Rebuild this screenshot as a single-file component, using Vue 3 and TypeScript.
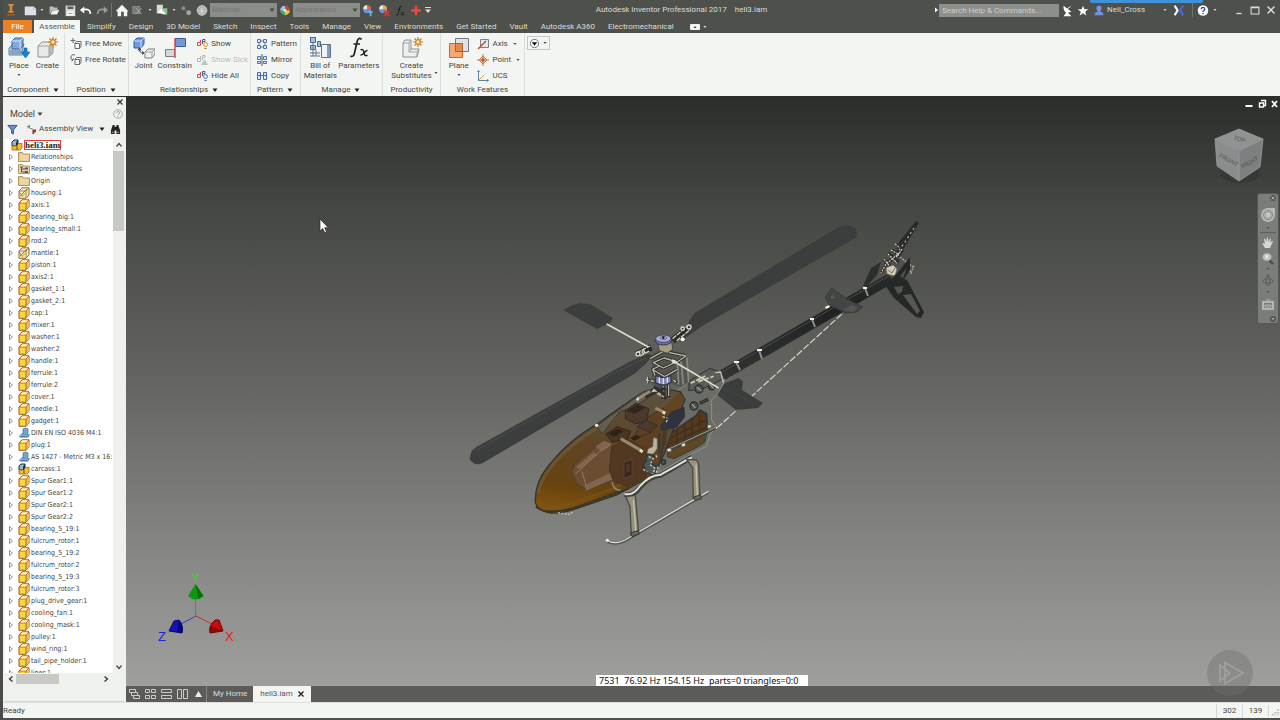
<script setup lang="ts">
interface TreeRow {
  label: string
  icon: string
}
interface SmallCommand {
  label: string
  icon: string
  disabled?: boolean
  menu?: boolean
}
interface BigCommand {
  lines: string[]
  icon: string
  menu?: boolean
}
interface Panel {
  title: string
  menu: boolean
  big: BigCommand[]
  small: SmallCommand[]
}

const menuTabs: string[] = [
  'Simplify', 'Design', '3D Model', 'Sketch', 'Inspect', 'Tools', 'Manage', 'View',
  'Environments', 'Get Started', 'Vault', 'Autodesk A360', 'Electromechanical',
]

const panels: Panel[] = [
  {
    title: 'Component', menu: true,
    big: [
      { lines: ['Place'], icon: 'place', menu: true },
      { lines: ['Create'], icon: 'create' },
    ],
    small: [],
  },
  {
    title: 'Position', menu: true, big: [],
    small: [
      { label: 'Free Move', icon: 'move' },
      { label: 'Free Rotate', icon: 'rotate' },
    ],
  },
  {
    title: 'Relationships', menu: true,
    big: [
      { lines: ['Joint'], icon: 'joint' },
      { lines: ['Constrain'], icon: 'constrain' },
    ],
    small: [
      { label: 'Show', icon: 'show' },
      { label: 'Show Sick', icon: 'sick', disabled: true },
      { label: 'Hide All', icon: 'hide' },
    ],
  },
  {
    title: 'Pattern', menu: true, big: [],
    small: [
      { label: 'Pattern', icon: 'pattern' },
      { label: 'Mirror', icon: 'mirror' },
      { label: 'Copy', icon: 'copy' },
    ],
  },
  {
    title: 'Manage', menu: true,
    big: [
      { lines: ['Bill of', 'Materials'], icon: 'bom' },
      { lines: ['Parameters'], icon: 'params' },
    ],
    small: [],
  },
  {
    title: 'Productivity', menu: false,
    big: [{ lines: ['Create', 'Substitutes'], icon: 'substitute', menu: true }],
    small: [],
  },
  {
    title: 'Work Features', menu: false,
    big: [{ lines: ['Plane'], icon: 'plane', menu: true }],
    small: [
      { label: 'Axis', icon: 'axis', menu: true },
      { label: 'Point', icon: 'point', menu: true },
      { label: 'UCS', icon: 'ucs' },
    ],
  },
]

const part = (label: string): TreeRow => ({ label, icon: 'part' })

const rows: TreeRow[] = [
  { label: 'Relationships', icon: 'folder' },
  { label: 'Representations', icon: 'reps' },
  { label: 'Origin', icon: 'folder' },
  { label: 'housing:1', icon: 'clear' },
  part('axis:1'),
  part('bearing_big:1'),
  part('bearing_small:1'),
  part('rod:2'),
  { label: 'mantle:1', icon: 'clear' },
  ...['piston:1', 'axis2:1', 'gasket_1:1', 'gasket_2:1', 'cap:1', 'mixer:1', 'washer:1',
    'washer:2', 'handle:1', 'ferrule:1', 'ferrule:2', 'cover:1', 'needle:1', 'gadget:1'].map(part),
  { label: 'DIN EN ISO 4036 M4:1', icon: 'bolt' },
  part('plug:1'),
  { label: 'AS 1427 - Metric M3 x 16:', icon: 'bolt' },
  { label: 'carcass:1', icon: 'assembly' },
  ...['Spur Gear1:1', 'Spur Gear1:2', 'Spur Gear2:1', 'Spur Gear2:2', 'bearing_5_19:1',
    'fulcrum_rotor:1', 'bearing_5_19:2', 'fulcrum_rotor:2', 'bearing_5_19:3', 'fulcrum_rotor:3',
    'plug_drive_gear:1', 'cooling_fan:1', 'cooling_mask:1', 'pulley:1', 'wind_ring:1',
    'tail_pipe_holder:1', 'liner:1'].map(part),
]
</script>

<template>
  <div class="app">
    <svg class="defs" aria-hidden="true">
      <defs>
        <symbol id="i-caret" viewBox="0 0 8 8"><path d="M1.500 2.500h5L4 6z" fill="currentColor" /></symbol>
        <symbol id="i-dot" viewBox="0 0 8 8"><path d="M2.500 3h3L4 5z" fill="currentColor" /></symbol>

        <symbol id="i-part" viewBox="0 0 12 12">
          <path d="M1 4 4 .8h7V8l-3 3.300H1z" fill="#f7d83c" stroke="#9a5a1c" />
          <path d="M8 11V4l3-3v7z" fill="#f6b75f" />
          <path d="M1 4h7v7M8 4l3-3" fill="none" stroke="#b46b24" />
          <path d="M2.300 3.500 4.500 1.300H10L8 3.500z" fill="#fff6c8" />
        </symbol>
        <symbol id="i-clear" viewBox="0 0 12 12">
          <path d="M1 4 4 .8h7V8l-3 3.300H1z" fill="#f5edd0" stroke="#8d6a35" />
          <path d="M1 4h7v7M8 4l3-3M2 9l7-7M1 5l4 5" fill="none" stroke="#a9803e" />
          <path d="m2.500 9.500 4-4 1 1.500-3 3z" fill="#f1c32e" />
        </symbol>
        <symbol id="i-folder" viewBox="0 0 12 12">
          <path d="M.5 10.500v-9h4l1 1.500h6v7.500z" fill="#e6c793" stroke="#b69561" />
          <path d="M1.500 4h9v5.500h-9z" fill="#f0d5a7" />
        </symbol>
        <symbol id="i-reps" viewBox="0 0 12 12">
          <path d="M.5 10.500v-9h4l1 1.500h6v7.500z" fill="#e6d1a9" stroke="#b69561" />
          <path d="M3.500 4v5H7M3.500 6H7M2 4h3" fill="none" stroke="#555" /><path d="M7 4.500h3v2H7zM7 8h3v2H7z" fill="#555" />
        </symbol>
        <symbol id="i-bolt" viewBox="0 0 12 12">
          <path d="m1 9 3-2.500 8 1-2 3H2z" fill="#3e7cab" />
          <path d="M5 2 8 1l2 1v4.500L8 8 5 7z" fill="#76a7cf" stroke="#386a93" stroke-width=".7" />
          <path d="m2 9 3-1 5 .5" stroke="#a9cbe3" fill="none" />
        </symbol>
        <symbol id="i-assembly" viewBox="0 0 12 12">
          <path d="M1 3 3 1h4v4L5 7H1z" fill="#9db7d2" stroke="#222c3a" />
          <path d="M1 7h5v4H1zM6 6l1.500-1.500H11V9l-2 2H6z" fill="#f0c02c" stroke="#9c6516" stroke-width=".8" />
          <path d="M5 3.500 7 1v4L5 7z" fill="#1d2c40" />
        </symbol>

        <symbol id="i-place" viewBox="0 0 22 22">
          <path d="m1 11 4-4h11l-2 7 4 1-4 3H1z" fill="#b9cbe0" stroke="#64809f" />
          <path d="M4 4 7 1h8v8l-3 3H4z" fill="#7ea8de" stroke="#39649f" />
          <path d="M4 4h8v8M12 4l3-3" fill="none" stroke="#dbe8f8" />
          <path d="M1 13h12v4H1z" fill="#88a4c1" />
          <path d="M16 11h3v4h3l-4.500 6L13 15h3z" fill="#1682d4" stroke="#0d63ad" stroke-width=".6" />
        </symbol>
        <symbol id="i-create" viewBox="0 0 22 22">
          <path d="m2 9 4-4h11v11l-4 4H2z" fill="#e8e9e8" stroke="#8b8f93" />
          <path d="M13 20V9l4-4v11z" fill="#b5b9bb" />
          <path d="M2 9h11v11" fill="none" stroke="#a1a5a7" />
          <path d="M17 0v10M12 5h10M13.500 1.500l7 7M20.500 1.500l-7 7" stroke="#c77a1c" stroke-width="1.200" />
          <circle cx="17" cy="5" r="2.300" fill="#fff0a6" stroke="#c1660c" />
        </symbol>
        <symbol id="i-joint" viewBox="0 0 22 22">
          <path d="m1 4 3-3h7v6l-3 4H1z" fill="#6f9be0" stroke="#335a9a" />
          <path d="M1 4h7v7M8 4l3-3" fill="none" stroke="#cadcf6" />
          <path d="m12 15 3-3h7v5l-3 4h-7z" fill="#eff0ef" stroke="#787d83" />
          <path d="M12 15h7v6M19 15l3-3" fill="none" stroke="#9b9fa4" />
          <path d="M6.500 12c0 3 1 4 4 4M6.500 11 5 13.500M6.500 11 8 13.500M11 16l-2-1.500M11 16l-2 1.500" fill="none" stroke="#333" />
        </symbol>
        <symbol id="i-constrain" viewBox="0 0 22 22">
          <path d="M11.500 1.500h10v8h-10z" fill="#7699d3" stroke="#375c9c" />
          <path d="M1.500 12.500h9v7h-9z" fill="#d6d8d8" stroke="#7c7f82" />
          <path d="M11 1v20" stroke="#e14145" stroke-width="1.400" />
        </symbol>
        <symbol id="i-bom" viewBox="0 0 22 22">
          <path d="M1.500.5h5v5h-5zM1.500 8.500h5v4h-5zM8.500 4.500h3v5h-3z" fill="#a7c0e1" stroke="#46698f" />
          <path d="M1 16h10M1 19h10M4 6v13M7 13v6" stroke="#667587" />
          <path d="M12.500 7.500h9v13h-9z" fill="#f2f3f4" stroke="#676f78" />
          <path d="M18 8h3v12h-3z" fill="#78a0cf" />
        </symbol>
        <symbol id="i-params" viewBox="0 0 22 22">
          <path d="M13.500 2.500C12 .3 9.800 1.500 9 5L6.500 16c-.7 3.300-2.500 4-4 3M5.500 7h6.500" fill="none" stroke="#222" stroke-width="1.700" />
          <path d="M12.500 13c2-1.500 3 0 3.500 2.500.6 3 1.500 4 3.500 2.500M19.500 13.500c-2-.7-4.500 5.500-7 4.500" fill="none" stroke="#222" stroke-width="1.500" />
        </symbol>
        <symbol id="i-substitute" viewBox="0 0 22 22">
          <path d="M2 6 4 3h6v9h8l-2 8H2z" fill="#eff0ee" stroke="#888d91" />
          <path d="M2 6h6v9h8v5M8 6l2-3M8 15l2-3M16 15l2-3" fill="none" stroke="#9fa3a6" />
          <path d="M17 0v10M12 5h10M13.500 1.500l7 7M20.500 1.500l-7 7" stroke="#c77a1c" stroke-width="1.200" />
          <circle cx="17" cy="5" r="2.300" fill="#fff0a6" stroke="#c1660c" />
        </symbol>
        <symbol id="i-plane" viewBox="0 0 22 22">
          <path d="M7.500 1.500h13v13h-13z" fill="#dfe2e7" stroke="#73797f" />
          <path d="M1.500 6.500h13v14h-13z" fill="#f79a57" fill-opacity=".85" stroke="#cd6a22" />
          <path d="M7.500 6.500h7v8h-7z" fill="#e58a4e" stroke="#a56235" />
        </symbol>

        <symbol id="i-move" viewBox="0 0 12 12">
          <path d="m5 5 1.500-1.500H11V8l-1.500 2.500H5zM5 5.500h4.500v5M3 0v5M.5 2.500h5" fill="#fafafa" stroke="#666b70" />
        </symbol>
        <symbol id="i-rotate" viewBox="0 0 12 12">
          <path d="m5 5 1.500-1.500H11V8l-1.500 2.500H5zM5 5.500h4.500v5" fill="#fafafa" stroke="#666b70" />
          <path d="M5 1C3 0 .5 1.500 1 4c.2 1 .8 2 2 2M3.500 4.500 3 6 1.500 7" fill="none" stroke="#555" />
        </symbol>
        <symbol id="i-show" viewBox="0 0 12 12">
          <path d="M1.500 4.500h3v3h-3zM4.500 2v5" fill="none" stroke="#d65050" />
          <path d="M6.500 6V1.500H9v2H7" fill="none" stroke="#3d64b0" />
          <circle cx="9.500" cy="6.500" r="2" fill="#fff5c0" stroke="#d79a22" /><path d="M8.500 10.500h2" stroke="#a16b22" />
        </symbol>
        <symbol id="i-sick" viewBox="0 0 12 12">
          <path d="M1.500 4.500h3v3h-3zM4.500 2v5M6.500 6V1.500H9v2H7" fill="none" stroke="#b6b8b6" />
          <path d="m8.500 5 3.500 6H5z" fill="#c2c4c2" />
        </symbol>
        <symbol id="i-hide" viewBox="0 0 12 12">
          <path d="M1.500 4.500h3v3h-3zM4.500 2v5" fill="none" stroke="#d65050" />
          <path d="M6.500 6V1.500H9v2H7" fill="none" stroke="#3d64b0" />
          <circle cx="9.500" cy="6.500" r="2" fill="#e6f0ff" stroke="#4b7ac0" /><path d="M8.500 10.500h2" stroke="#4b5c7c" />
        </symbol>
        <symbol id="i-pattern" viewBox="0 0 12 12">
          <path d="M1.500 1.500h3v3h-3zM7.500 1.500h3v3h-3zM1.500 7.500h3v3h-3zM7.500 7.500h3v3h-3z" fill="#dbe7f7" stroke="#4d72b2" />
          <path d="M5 3h2M5 9h2M3 5v2M9 5v2" stroke="#777" />
        </symbol>
        <symbol id="i-mirror" viewBox="0 0 12 12">
          <path d="M1.500 2.500h3v3h-3zM1.500 7.500h3v2h-3zM7.500 2.500h3v3h-3zM7.500 7.500h3v2h-3z" fill="#dbe7f7" stroke="#4d72b2" />
          <path d="M6 0v12" stroke="#555" />
        </symbol>
        <symbol id="i-copy" viewBox="0 0 12 12">
          <path d="M1.500 2.500h3v3h-3zM1.500 5.500h3v4h-3zM7.500 2.500h3v3h-3zM7.500 5.500h3v4h-3z" fill="#dbe7f7" stroke="#3f69b5" />
          <path d="M5 5.500h2" stroke="#666" />
        </symbol>
        <symbol id="i-axis" viewBox="0 0 12 12">
          <path d="M3.500 1.500h8v8h-8z" fill="#e4e6e8" stroke="#7c8186" /><path d="m1 11 8-8" stroke="#b9462a" stroke-width="1.200" />
        </symbol>
        <symbol id="i-point" viewBox="0 0 12 12">
          <path d="m6 2 4 4-4 4-4-4z" fill="#f6c5a0" stroke="#d27a49" /><path d="M6 0v12M0 6h12" stroke="#d27a49" />
          <circle cx="6" cy="6" r="1.500" fill="#b2511f" />
        </symbol>
        <symbol id="i-ucs" viewBox="0 0 12 12">
          <path d="M1.500 1v9.500H11" fill="none" stroke="#5f7fa8" /><path d="m2 10 5-5" stroke="#c8a645" />
          <path d="m0 2 1.500-2L3 2zM10 9l2 1.500L10 12z" fill="#5474a0" />
        </symbol>
      </defs>
    </svg>

    <header class="titlebar">
      <div class="quick">
        <button class="qb" aria-label="Application menu">
          <svg viewBox="0 0 16 16"><path d="M5 1h6v2H9.500v6H11v2H5V9h1.500V3H5z" fill="#d98b3c" /><path d="M4 13.500h8" stroke="#b2641e" stroke-width="2" stroke-dasharray="2 1" /></svg>
        </button>
        <i class="nudge"></i>
        <button class="qb" aria-label="New"><svg viewBox="0 0 16 16"><path d="M2 4h10l3 3v7H2z" fill="#dedfe6" /><path d="M12 4v3h3" fill="#fff" stroke="#888b92" stroke-width=".6" /></svg></button>
        <button class="qc" aria-label="New options"><svg><use href="#i-dot" /></svg></button>
        <button class="qb" aria-label="Open"><svg viewBox="0 0 16 16"><path d="M3 13V4h4l1 1h4v3H6z" fill="#b9bdb7" /><path d="m6 8.500 8-.5-2.500 5H4z" fill="#f1f3ef" /></svg></button>
        <button class="qb" aria-label="Save"><svg viewBox="0 0 16 16"><path d="M3 3h11v12H3z" fill="#dcdedb" /><path d="M5 4h7v3H5z" fill="#555e66" /><path d="M5 10h7v4H5z" fill="#fff" /><path d="M6 12h5" stroke="#888" /></svg></button>
        <button class="qb" aria-label="Undo"><svg viewBox="0 0 16 16"><path d="M5 7.500c6-1 8 1 8 5" fill="none" stroke="#fff" stroke-width="2" /><path d="m1 8 5-4v8z" fill="#fff" /></svg></button>
        <button class="qb" aria-label="Redo"><svg viewBox="0 0 16 16"><path d="M11 7.500c-6-1-8 1-8 5" fill="none" stroke="#999b98" stroke-width="2" /><path d="m15 8-5-4v8z" fill="#999b98" /></svg></button>
        <i class="qsep"></i>
        <button class="qb" aria-label="Home"><svg viewBox="0 0 16 16"><path d="m1 9 7-7 7 7-1 1v5h-4v-5H7v5H3v-5z" fill="#f5f6f3" /></svg></button>
        <button class="qb" aria-label="Appearance overrides"><svg viewBox="0 0 16 16"><path d="M2 4h8v8H2z" fill="#777976" stroke="#9c9e9b" stroke-width=".8" /><path d="m5 13 7-7M6 6l6 7" stroke="#b0b2ae" /></svg></button>
        <button class="qc" aria-label="Override options"><svg><use href="#i-dot" /></svg></button>
        <button class="qb" aria-label="Select"><svg viewBox="0 0 16 16"><path d="M2 2h7v10H2z" fill="#d8dbd7" /><path d="M8 6h6v7H8z" fill="#8bc38a" /><path d="m4 11 3-4 5 6" fill="#fff" stroke="#fff" /></svg></button>
        <button class="qc" aria-label="Select options"><svg><use href="#i-dot" /></svg></button>
        <button class="qb" aria-label="Links"><svg viewBox="0 0 16 16"><circle cx="5" cy="6" r="2.200" fill="#8a8c89" /><circle cx="11" cy="11" r="2.800" fill="#a6a8a5" /><path d="m6 7 4 3" stroke="#777" /></svg></button>
        <button class="qb" aria-label="Globe"><svg viewBox="0 0 16 16"><circle cx="8" cy="8.500" r="5.500" fill="#a8aaa9" stroke="#d9dbd8" /><path d="M3 9h10M8 4v10M5 5l6 8M11 5l-6 8" stroke="#e5e5e5" stroke-width=".7" /></svg></button>
        <span class="combo"><select aria-label="Material" disabled><option>Material</option></select><svg><use href="#i-caret" /></svg></span>
        <button class="qb" aria-label="Color wheel"><svg viewBox="0 0 16 16"><path d="M8 8.500V3a5.500 5.500 0 0 1 5.500 5.500z" fill="#e33c32" /><path d="M8 8.500h5.500A5.500 5.500 0 0 1 8 14z" fill="#f5c338" /><path d="M8 8.500V14a5.500 5.500 0 0 1-5.500-5.500z" fill="#49ad54" /><path d="M8 8.500H2.500A5.500 5.500 0 0 1 8 3z" fill="#9bc4f5" /><circle cx="8" cy="8.500" r="1.800" fill="#fff" fill-opacity=".7" /></svg></button>
        <span class="combo"><select aria-label="Appearance" disabled><option>Appearance</option></select><svg><use href="#i-caret" /></svg></span>
        <button class="qb" aria-label="Adjust"><svg viewBox="0 0 16 16"><circle cx="7" cy="7" r="4.500" fill="#6795d6" /><path d="M7 7V2.500A4.500 4.500 0 0 1 11.500 7z" fill="#e2584c" /><path d="M7 7H2.500A4.500 4.500 0 0 1 7 2.500z" fill="#ece7d9" /><path d="M8 9h6l-2 3v3h-2v-3z" fill="#68b6ef" /></svg></button>
        <button class="qb" aria-label="Clear"><svg viewBox="0 0 16 16"><circle cx="7" cy="7" r="4.500" fill="#6795d6" /><path d="M7 7V2.500A4.500 4.500 0 0 1 11.500 7z" fill="#e8a74c" /><path d="M7 7H2.500A4.500 4.500 0 0 1 7 2.500z" fill="#ece7d9" /><path d="m8 9 6 6M14 9l-6 6" stroke="#e0362c" stroke-width="1.800" /></svg></button>
        <button class="qb" aria-label="Formula"><svg viewBox="0 0 16 16"><path d="M10 4c-2-1-2.500 1-3 4l-1 4c-.3 1.500-1 2-2.500 1.500M5 7.500h4M9 10l4 4M13 10l-4 4" fill="none" stroke="#222" stroke-width="1.200" /></svg></button>
        <button class="qb" aria-label="Add"><svg viewBox="0 0 16 16"><path d="M8 3v11M2.500 8.500h11" stroke="#ef4a3d" stroke-width="2.800" /></svg></button>
        <button class="qc" aria-label="Customize"><svg viewBox="0 0 8 8"><path d="M1 1.500h6" stroke="#ddd" /><path d="M1 3.500h6L4 7z" fill="#ddd" /></svg></button>
      </div>
      <div class="doc-title"><span>Autodesk Inventor Professional 2017</span><span>heli3.iam</span></div>
      <div class="info">
        <button class="qc" aria-label="Collapse search"><svg viewBox="0 0 8 8"><path d="M4 1.500v5L7 4z" fill="#fff" /></svg></button>
        <input class="search" type="text" aria-label="Search help and commands" placeholder="Search Help &amp; Commands...">
        <button class="qb" aria-label="Subscription"><svg viewBox="0 0 16 16"><path d="m4 3 9 7-4 1 4 4H4l3-4C4 9 4 6 4 3z" fill="#fff" /><path d="m8 7 4-3" stroke="#fff" /></svg></button>
        <button class="qb" aria-label="Favorites"><svg viewBox="0 0 16 16"><path d="m8 3 1.600 4.200h4.400L10.500 10l1.300 4.300L8 11.800l-3.800 2.500L5.500 10 2 7.200h4.400z" fill="#fff" /></svg></button>
        <button class="account"><svg viewBox="0 0 16 16"><path d="M8 3c3 0 3.500 2.500 2.500 5L9.500 10c3 .5 3.500 1.500 3.500 4H3c0-2.500.5-3.500 3.500-4L5.500 8C4.500 5.500 5 3 8 3z" fill="#6f95e0" /></svg><span>Neil_Cross</span></button>
        <button class="qc" aria-label="Account menu"><svg><use href="#i-dot" /></svg></button>
        <button class="qb exchange" aria-label="Exchange"><svg viewBox="0 0 16 16"><path d="m3 3 3.500 5.500L3 14" fill="none" stroke="#fff" stroke-width="2.400" /><path d="m13 3-4 5.500 4 5.500" fill="none" stroke="#4967cf" stroke-width="2.800" /></svg></button>
        <i class="qsep"></i>
        <button class="qb" aria-label="Help"><svg viewBox="0 0 16 16"><circle cx="8" cy="8.500" r="6" fill="#fff" /><path d="M6 7c0-2.700 4-2.700 4 0C10 8.500 8 8.500 8 10.300M8 11.500v1.300" fill="none" stroke="#2b50b4" stroke-width="1.600" /></svg></button>
        <button class="qc" aria-label="Help menu"><svg><use href="#i-dot" /></svg></button>
        <div class="window-buttons">
          <button class="qb" aria-label="Minimize"><svg viewBox="0 0 16 16"><path d="M5 12h6" stroke="#ddd" stroke-width="1.500" /></svg></button>
          <button class="qb" aria-label="Maximize"><svg viewBox="0 0 16 16"><path d="M3.500 4.500h9v8h-9zM3 5.500h10" fill="none" stroke="#ddd" stroke-width="1.200" /></svg></button>
          <button class="qb" aria-label="Close"><svg viewBox="0 0 16 16"><path d="m4 4 8 8M12 4l-8 8" stroke="#e5e5e5" stroke-width="1.500" /></svg></button>
        </div>
        <i class="blue-strip"></i>
      </div>
    </header>

    <nav class="tabs">
      <button class="tab file">File</button>
      <button class="tab active">Assemble</button>
      <button v-for="t in menuTabs" :key="t" class="tab">{{ t }}</button>
      <button class="tab-toggle" aria-label="Minimize ribbon">
        <svg class="pill" viewBox="0 0 10 8"><rect x="0" y="1" width="10" height="6" rx="1" fill="#f2f2f2" /><path d="M3.500 5h3L5 3z" fill="#444" /></svg>
        <svg class="tiny"><use href="#i-dot" /></svg>
      </button>
    </nav>

    <section class="ribbon">
      <div v-for="p in panels" :key="p.title" class="panel">
        <div class="panel-body">
          <button v-for="b in p.big" :key="b.icon" class="big">
            <svg class="big-icon"><use :href="'#i-' + b.icon" /></svg>
            <span v-for="l in b.lines" :key="l">{{ l }}</span>
            <svg v-if="b.menu" :class="['tiny', b.lines.length > 1 ? 'beside' : '']"><use href="#i-dot" /></svg>
          </button>
          <div v-if="p.small.length" class="stack">
            <button v-for="s in p.small" :key="s.label" class="small" :disabled="s.disabled">
              <svg class="small-icon"><use :href="'#i-' + s.icon" /></svg>
              <span>{{ s.label }}</span>
              <svg v-if="s.menu" class="tiny"><use href="#i-dot" /></svg>
            </button>
          </div>
        </div>
        <div class="panel-title">{{ p.title }}<svg v-if="p.menu" class="tiny"><use href="#i-caret" /></svg></div>
      </div>
      <button class="ribbon-options" aria-label="Ribbon options">
        <svg viewBox="0 0 12 12"><circle cx="6" cy="6" r="4.500" fill="#fff" stroke="#666" /><path d="M3 4.500h6L6 8.500z" fill="#111" /></svg>
        <svg class="tiny"><use href="#i-dot" /></svg>
      </button>
    </section>

    <main class="work">
      <aside class="browser">
        <div class="browser-close"><button aria-label="Close browser"><svg viewBox="0 0 8 8"><path d="m1.500 1.500 5 5M6.500 1.500l-5 5" stroke="#333" stroke-width="1.200" /></svg></button></div>
        <div class="browser-head">
          <button class="model">Model<svg class="tiny"><use href="#i-caret" /></svg></button>
          <button class="help" aria-label="Browser help"><svg viewBox="0 0 10 10"><circle cx="5" cy="5" r="4.300" fill="none" stroke="#999" stroke-width=".8" /><path d="M3.700 4c0-2 2.800-2 2.800 0C6.500 5 5 5 5 6.300M5 7v1" fill="none" stroke="#8a8a8a" stroke-width=".9" /></svg></button>
        </div>
        <div class="browser-tools">
          <button aria-label="Filter"><svg viewBox="0 0 12 12"><path d="M1 1.500h10L7 6.500V11l-2-1V6.500z" fill="#6f8fc0" stroke="#34507e" /></svg></button>
          <button class="view-select"><svg viewBox="0 0 12 12"><path d="M1 3h3M3.500 1v4M5 5h2" stroke="#555" /><path d="M7 6h4v3H9v2H7z" fill="#9a3838" /></svg><span>Assembly View</span><svg class="tiny"><use href="#i-caret" /></svg></button>
          <button aria-label="Find"><svg viewBox="0 0 12 12"><path d="M3 1h2v2h2V1h2l2 6v4H7V7H5v4H1V7z" fill="#222" /><path d="M2 9h2M8 9h2" stroke="#bbb" /></svg></button>
        </div>
        <div class="tree-area">
          <ul class="tree">
            <li class="root"><svg class="node"><use href="#i-assembly" /></svg><span>heli3.iam</span></li>
            <li v-for="r in rows" :key="r.label">
              <button class="expand" :aria-label="'Expand ' + r.label"><svg viewBox="0 0 6 8"><path d="M1.500 1.500v5L4.500 4z" fill="#fff" stroke="#777" stroke-width=".8" /></svg></button>
              <svg class="node"><use :href="'#i-' + r.icon" /></svg>
              <span>{{ r.label }}</span>
            </li>
          </ul>
          <div class="vscroll">
            <button aria-label="Scroll up"><svg viewBox="0 0 8 8"><path d="m1.500 5.500 2.500-3 2.500 3" fill="none" stroke="#444" stroke-width="1.200" /></svg></button>
            <i></i>
            <button aria-label="Scroll down"><svg viewBox="0 0 8 8"><path d="m1.500 2.500 2.500 3 2.500-3" fill="none" stroke="#444" stroke-width="1.200" /></svg></button>
          </div>
        </div>
        <div class="hscroll">
          <button aria-label="Scroll left"><svg viewBox="0 0 8 8"><path d="m5.500 1.500-3 2.500 3 2.500" fill="none" stroke="#333" stroke-width="1.300" /></svg></button>
          <i></i>
          <button aria-label="Scroll right"><svg viewBox="0 0 8 8"><path d="m2.500 1.500 3 2.500-3 2.500" fill="none" stroke="#333" stroke-width="1.300" /></svg></button>
        </div>
        <div class="browser-foot"></div>
      </aside>

      <div class="stage">
        <div class="viewport">
          <svg class="scene" viewBox="126 97 1154 589" role="img" aria-label="Helicopter assembly">
            <defs>
              <linearGradient id="hull" x1=".5" y1="0" x2=".35" y2="1">
                <stop offset="0" stop-color="#5b5240" /><stop offset=".45" stop-color="#5e4526" /><stop offset=".8" stop-color="#67430f" /><stop offset="1" stop-color="#80530f" />
              </linearGradient>
              <linearGradient id="boom" x1="0" y1="0" x2=".35" y2="1">
                <stop offset="0" stop-color="#454746" /><stop offset=".5" stop-color="#1f2120" /><stop offset="1" stop-color="#393b3a" />
              </linearGradient>
              <pattern id="carbon" width="4" height="4" patternUnits="userSpaceOnUse" patternTransform="rotate(-30)">
                <rect width="4" height="4" fill="#3d3f3f" /><path d="M0 1h4" stroke="#383a3a" />
              </pattern>
            </defs>

            <!-- main rotor blades and left paddle -->
            <path d="M695 313 838 228q9-5 17 0 3 5 1 9L703 325l-21 15 8-20z" fill="url(#carbon)" stroke="#383a3a" stroke-width=".6" />
            <path d="M471 455q0-5 6-8L628 363l20-9 4 2-7 8-10 9L482 463q-8 3-12-4z" fill="url(#carbon)" stroke="#303232" stroke-width=".6" />
            <path d="M475 451 612 374 646 358" stroke="#525453" fill="none" stroke-width=".7" />
            <path d="m563 310 9-5 8-2 10 1 23 14-3 5-13 6z" fill="url(#carbon)" />

            <!-- tail belt lines -->
            <path d="m717 428 126-115" stroke="#d5d6ce" stroke-width="1.200" stroke-dasharray="7 2" />
            <path d="m723 381 47-28" stroke="#b7b8b0" stroke-dasharray="4 2" />

            <!-- tail boom -->
            <path d="m719 371 170-98 4 10-168 97z" fill="url(#boom)" />
            <path d="m722 372 168-97" stroke="#4b4d4d" />
            <g fill="none" stroke="#8d908e" stroke-width="2">
              <path d="m717 373 4 7M736 362l4 8M759 350l3 9M812 319l3 8M865 288l3 8" />
            </g>
            <g fill="#f4f4ec"><path d="M716 371h4v2h-4zM734 361h5v2h-5zM757 349h5v2h-5zM810 318h4v2h-4zM863 287h4v2h-4zM825 307l4-2 1 2-4 2z" /></g>
            <path fill-rule="evenodd" d="m832 288 15 11 16 8-6 5-11 1-17-8-4-8zM832 293l-3 7 8-1z" fill="#444646" stroke="#333535" stroke-width=".7" />
            <path d="m843 310 9-5 6 3-5 4z" fill="#535654" />

            <!-- tail rotor and fin -->
            <path d="m916 221 3 2-15 25-8 6 3-12z" fill="#292b2a" />
            <path d="m863 286 8-18 10-6-4 13-10 11z" fill="#2c2e2d" />
            <path d="m914 228-9 14-8 11" fill="none" stroke="#b9b9ac" stroke-width="1.200" stroke-dasharray="2 3" />
            <path d="m896 244 4 4M892 250l6 4-12 10-5 9M888 253l11 9M884 259l8 9M903 249l-5 8" fill="none" stroke="#2c2e2c" stroke-width="3" />
            <path d="m895 244 5 4M891 250l7 4-12 10-5 9M888 254l9 9M884 259l7 9M902 249l-5 8M896 257l3-4" fill="none" stroke="#d0cebf" stroke-width="1.200" stroke-dasharray="2 1" />
            <path d="m900 257 14 11M906 262l5 11 3-8" stroke="#9f9f94" stroke-width="1.500" stroke-dasharray="2 1" fill="none" />
            <path d="m886 268 7-3 4 4-2 7-8-2z" fill="#d3cdb6" stroke="#706d61" stroke-width=".7" />
            <path d="m888 270 4 3 3-5" fill="none" stroke="#78705e" />
            <path fill-rule="evenodd" d="m885 285 14-14 11-14v13l-6 9 3 1 17 32-3 6-5-1-22-19zM900 276l7-8-4 10zM894 287l9-1-1 6-4 2zM903 295l8-1 9 17-3 3z" fill="#252827" />

            <!-- right stabiliser paddle -->
            <path d="m715 393 10-10 14-5 4 4-1 8 21 13-5 5-22 2z" fill="#3a3d3c" />
            <path d="m719 393 21 15M724 388l33 17" stroke="#424543" />

            <g transform="translate(530 320) scale(.3333)" stroke-linejoin="round">
              <!-- side frame -->
              <path d="m430 220 50-35 60-38 30 12 12 30-22 36-15 15v60l15 22-20 20-10 36-50 26-95 55 15-60z" fill="#6a6c68" stroke="#8f918b" stroke-width="3" />
              <path d="m478 182 62-37 32 12 4 22-60 28-40 5z" fill="#5b5d59" stroke="#2f3130" stroke-width="3" />
              <path d="m482 190 44-22M505 185l46-16" stroke="#d4d0be" stroke-width="5" stroke-dasharray="14 5" />
              <path d="M556 158 572 156 580 188" fill="none" stroke="#c9c8bc" stroke-width="4" />
              <g fill="#52544f" stroke="#2e302f" stroke-width="4">
                <circle cx="507" cy="207" r="12" /><circle cx="492" cy="258" r="12" /><circle cx="545" cy="200" r="9" /><circle cx="400" cy="426" r="7" />
                <path d="m510 246 22-10 2 6-22 10z" />
              </g>
              <path d="m538 192 14 14M500 202l14 10M486 252l10 12" stroke="#c6c4b5" stroke-width="3" />
              <path d="m414 345 84-58 12-17 20 12 2 54-118 54z" fill="#55391a" stroke="#353631" stroke-width="5" />
              <path d="m420 372 108-50M424 352l100-50M442 325v50M464 312v50M486 298v52M508 285v54" stroke="#3a3124" stroke-width="4" />
              <path d="m412 398 118-58-6 26-20 14-72 36-20-6z" fill="#5f4722" stroke="#3a3a33" stroke-width="3" />
              <path d="m412 392 150-70" stroke="#42443f" stroke-width="8" /><path d="m412 389 150-69" stroke="#a09f92" stroke-width="3" />
              <path d="m410 386 12-2 3 10-12 2zM454 372l12-4v10l-10 3zM532 316l12-2v8l-10 4zM556 318l10 4-8 8z" fill="#e6e1cd" stroke="#55554c" stroke-width="2" />

              <!-- canopy shell -->
              <path d="M16 548C14 500 30 468 55 438 108 370 160 336 205 310c46-34 92-66 138-95l42-12 66 12 14 24-24 60-38 102-33 64-110 60-130 44c-50 16-100 16-114-21z" fill="url(#hull)" stroke="#33332e" stroke-width="4" />
              <path d="M28 540c10 24 60 24 110 6l116-42 96-54" fill="none" stroke="#7d561e" stroke-width="8" stroke-opacity=".55" />
              <path d="M24 520C36 450 120 372 200 325" fill="none" stroke="#766245" stroke-width="10" stroke-opacity=".5" />
              <path d="M18 560c20 22 80 16 130-2l112-40 40-14" fill="none" stroke="#3b3523" stroke-width="5" />
              <path d="m200 318 140-102 30 6-50 34-52 20-52 66z" fill="#6a675a" fill-opacity=".7" stroke="#3b3c36" stroke-width="3" />

              <!-- electronics seen through the shell -->
              <path d="m400 262 48-46 16 20-22 44-34 12z" fill="#644522" />
              <path d="m340 300 60-36 14 40-10 70-40 20-60-30z" fill="#5d3f21" stroke="#43341f" stroke-width="3" />
              <path d="m125 455 10-22 62-52 28-18 20 10-4 76 8 32-80 28-26-14z" fill="#6b4e32" stroke="#50402c" stroke-width="3" />
              <path d="m196 380 26-18 24 10-32 20zM164 496l78-38 6 20-80 34zM138 440l54-44 8 10-52 42z" fill="#806550" />
              <path d="m136 462 74-68 30-18M168 496l-12-42" fill="none" stroke="#94785c" stroke-width="3" />
              <path d="M245 382 290 356l62 40-4 76-56 28-42-18-12-32z" fill="#523820" stroke="#443523" stroke-width="3" />
              <path d="m286 272 32-22 38 16-4 34-34 12-32-16z" fill="#4b3a2c" stroke="#2d2822" stroke-width="3" />
              <path d="m290 272 30-18 24 10-30 18z" fill="#33241c" />
              <path d="m228 342 34-22 40 14-10 24-46 8z" fill="#493620" stroke="#2b251c" stroke-width="3" />
              <path d="m234 342 28-16 18 8-26 16zM300 354l20-10 12 8-18 10z" fill="#2f2118" />
              <path d="m282 428 24-10v48l-24 10z" fill="#332821" stroke="#6c5036" stroke-width="2" /><path d="m288 434 12-5v24l-12 6z" fill="#533025" />
              <path d="m320 320 28-18 34 14-24 20zM330 350l40-16" fill="#4c3a2e" stroke="#37302a" stroke-width="3" />
              <path d="m392 318 32-42 38-14 2 28-24 32-46 8z" fill="#30323e" stroke="#2a2b30" stroke-width="2" />
              <path d="M246 486c4 20 14 26 26 24" fill="none" stroke="#8a8c86" stroke-width="4" />
              <g fill="none" stroke="#98896c" stroke-width="9"><path d="m272 356 62 36M322 238l38-24M370 212l30 18M376 264l28 14" /></g>
              <g fill="none" stroke="#e4dcc5" stroke-width="9"><path d="m330 390 8 6M320 236l6 3M368 211l6 3M398 276l8 4" /></g>
              <path d="m370 352 12 4v30l-12 16h-20l4-16 14-6z" fill="#bab49b" stroke="#55544a" stroke-width="2" />
              <path d="m352 402 20 6-8 22 18 12-8 24-26-8-8-26 8-8zM404 320l-6 62-12 60M388 340v60" fill="#515753" stroke="#33393a" stroke-width="5" />
              <path d="m356 410 14 6-10 18 16 12-10 16M340 448l12 8M378 406l4 10M384 440l-6 20M408 306l8-10M398 290l14 4" fill="none" stroke="#c5cdc8" stroke-width="4" stroke-dasharray="7 5" />

              <!-- rotor mast -->
              <path d="m368 98 36-14 64 18 8 86-24 14-34-12-40 18-14-18z" fill="#4f504a" fill-opacity=".7" />
              <path d="m452 110 8 84M470 104l6 82M442 120l4 74" stroke="#8d8a7b" stroke-width="5" />
              <path d="m360 116 40-22 68 14-26 18-40-12-32 14 30 16 42-20M370 150l34 20 38-22M376 168l-8-20 20-10M400 196l-2 40M416 196v36" fill="none" stroke="#252724" stroke-width="9" />
              <path d="m360 116 40-22 68 14-26 18-40-12-32 14 30 16 42-20M370 150l34 20 38-22M376 168l-8-20 20-10M400 198l-2 30M416 196v32" fill="none" stroke="#b8b5a5" stroke-width="4" />
              <path d="m384 72 4 20 24 8 16-12-2-20z" fill="#a59b80" stroke="#4d483e" stroke-width="3" />
              <ellipse cx="400" cy="62" rx="24" ry="13" fill="#6d72a0" stroke="#30334c" stroke-width="3" />
              <ellipse cx="400" cy="56" rx="23" ry="11" fill="#a9aed8" stroke="#454863" stroke-width="3" />
              <ellipse cx="400" cy="54" rx="11" ry="5" fill="none" stroke="#555a80" stroke-width="2" /><circle cx="400" cy="53" r="4" fill="#1d1d2b" />
              <path d="M378 166q22 14 44 0l2 20q-22 18-48 2z" fill="#8386b8" stroke="#34364c" stroke-width="4" /><path d="M388 172v18M400 174v18M412 172v16" stroke="#dedff2" stroke-width="4" />
              <path d="m348 180 24 4M352 170v20M430 180l12 10M346 232l60-28M372 200l34 24M408 238l-10-16" fill="none" stroke="#2f312d" stroke-width="8" />
              <path d="m348 180 24 4M352 170v20M430 180l12 10M372 210l30 22" fill="none" stroke="#cac7b6" stroke-width="4" stroke-dasharray="10 4" />
              <path d="m318 104 46-22M428 62l52-42" fill="none" stroke="#292a27" stroke-width="20" />
              <path d="m320 98 40-20M330 108l30-16M428 56l44-38M440 62l42-34" fill="none" stroke="#d8d5c7" stroke-width="4" stroke-dasharray="14 3" />
              <g fill="#393a36" stroke="#dedccb" stroke-width="4"><circle cx="324" cy="102" r="6" /><circle cx="340" cy="96" r="4" /><circle cx="477" cy="21" r="6" /><circle cx="458" cy="26" r="5" /></g>
              <circle cx="458" cy="58" r="6" fill="#fff" /><path d="m428 118 12 6-4 8-12-6z" fill="#f4f2e4" />
              <path d="M230 12 354 80M428 122l138 82" stroke="#dddccc" stroke-width="5" />

              <!-- landing gear -->
              <path d="M284 524q26 6 46-22 30-34 62-36 44-24 78-46l16-8" fill="none" stroke="#40423e" stroke-width="15" />
              <path d="M284 522q26 6 46-24 30-34 62-34 44-24 78-44l16-8" fill="none" stroke="#e3e3d9" stroke-width="6" />
              <path d="m288 530 28-4 10 114-22 8-4-88zM470 418l30 2 6 12 4 104-20 6-2-98z" fill="#98927e" stroke="#4a4b43" stroke-width="4" />
              <path d="m310 540 8 98M498 434l4 98" stroke="#c7c0a8" stroke-width="4" />
              <path d="M230 662q24 16 55 0l250-146" fill="none" stroke="#53554f" stroke-width="9" />
              <path d="M230 660q24 16 55 0l250-146" fill="none" stroke="#dedfd6" stroke-width="4" />
              <path d="m302 638 24-6 2 10-22 8zM490 532l22-8 2 12-18 6z" fill="#6a675a" stroke="#33342f" stroke-width="3" />
              <path d="M84 578l30 6 16-8" fill="none" stroke="#b6c2c2" stroke-width="4" stroke-dasharray="6 4" />
              <g fill="#eee"><circle cx="200" cy="316" r="5" /><circle cx="232" cy="661" r="5" /></g>
            </g>

            <!-- axis triad -->
            <path d="M195.500 616v-18" stroke="#2ca52c" /><path d="m196 616 16 8" stroke="#c03232" /><path d="m196 616-15 8" stroke="#3a3aba" />
            <path d="m195.500 584 8 12q-8 7-15.500 0z" fill="#0d970d" /><path d="m195.500 584 8 12-5 3z" fill="#067206" />
            <path d="m223 631-13 2q-2-7 5-13h4z" fill="#c80b0b" stroke="#610808" /><path d="m223 631-13 2q-1-3 1-7z" fill="#8d0808" />
            <path d="m169 631 5-10 5-1q5 6 3 13z" fill="#1414b4" stroke="#0a0a69" /><path d="m179 620q5 6 3 13l-5-1z" fill="#070780" />
            <g class="axis-name"><text x="191" y="582" fill="#3fcf3f">Y</text><text x="225" y="641" fill="#e22020">X</text><text x="158" y="641" fill="#2424dd">Z</text></g>

            <!-- pointer -->
            <path d="M320 219v12l2.800-2.500 1.900 4.200 1.900-.9-1.900-4.100h3.600z" fill="#fff" stroke="#222" stroke-width=".7" />
          </svg>

          <svg class="cube" viewBox="0 0 54 64" role="img" aria-label="View cube">
            <ellipse cx="28" cy="50" rx="20" ry="9" fill="#222" fill-opacity=".22" />
            <path d="m27 5 24 10-24 12L3 15z" fill="#909391" /><path d="m3 15 24 12v30L5 42z" fill="#8a8d8b" /><path d="m51 15-24 12v30l21-14z" fill="#7c807e" />
            <path d="m27 5 24 10-3 28-21 14L5 42 3 15zM3 15l24 12 24-12M27 27v30" fill="none" stroke="#a0a4a3" stroke-width=".7" />
            <circle cx="27" cy="27" r="3" fill="#858aa0" fill-opacity=".6" />
            <g class="cube-text"><text transform="rotate(18 27 16)" x="21" y="17">TOP</text><text transform="rotate(29 7 34)" x="6" y="33">FRONT</text><text transform="rotate(-29 32 45)" x="31" y="44">RIGHT</text></g>
          </svg>

          <div class="mdi">
            <button aria-label="Minimize document"><svg viewBox="0 0 10 10"><path d="M1.500 7h7" stroke="#fff" stroke-width="2" /></svg></button>
            <button aria-label="Restore document"><svg viewBox="0 0 10 10"><path d="M4 1.500h4.500v5H7M2.500 4h4v4h-4z" fill="none" stroke="#fff" stroke-width="1.400" /></svg></button>
            <button aria-label="Close document"><svg viewBox="0 0 10 10"><path d="m2 2 5 6M7 2 2 8" stroke="#fff" stroke-width="1.800" /></svg></button>
          </div>

          <nav class="navbar" aria-label="Navigation bar">
            <button class="nav-end" aria-label="Close navigation bar"><svg viewBox="0 0 8 8"><circle cx="4" cy="4" r="3" fill="#555755" /><path d="m2.500 2.500 3 3M5.500 2.500l-3 3" stroke="#aaa" /></svg></button>
            <button class="nav-wheel" aria-label="Steering wheel"><svg viewBox="0 0 16 16"><path d="M8 1h7v7a7 7 0 1 1-7-7z" fill="#b5b8b5" /><circle cx="8" cy="8" r="4.500" fill="#c5c8c5" stroke="#828582" /><rect x="5" y="5" width="6" height="6" rx="2" fill="none" stroke="#949794" /></svg></button>
            <svg class="tiny"><use href="#i-dot" /></svg>
            <i></i>
            <button aria-label="Pan"><svg viewBox="0 0 14 14"><path d="M4 12 1.500 8l1-1L4 8 3 3l1-.5L5.500 6 6 1.500h1l.5 4.500L9 2.500l1 .5L9 7l2-2 1 .5-2 4-1 2.500z" fill="#d6d8d5" /></svg></button>
            <button aria-label="Zoom"><svg viewBox="0 0 14 14"><path d="m8 9 4 4" stroke="#4e504d" stroke-width="2.500" /><ellipse cx="6" cy="6" rx="4.500" ry="4" fill="#c4c7c4" stroke="#8b8e8a" /><path d="M5 3v5l2-2z" fill="#f4f4f4" /></svg></button>
            <svg class="tiny"><use href="#i-dot" /></svg>
            <button aria-label="Orbit"><svg viewBox="0 0 14 14"><ellipse cx="7" cy="7" rx="5" ry="2.200" fill="none" stroke="#5a5d5a" /><ellipse cx="7" cy="7" rx="2" ry="5" fill="none" stroke="#5a5d5a" /><path d="m7 0 2 3H5z" fill="#5a5d5a" /></svg></button>
            <svg class="tiny"><use href="#i-dot" /></svg>
            <button aria-label="Look at"><svg viewBox="0 0 14 14"><path d="M2 5h10v7H2z" fill="none" stroke="#c4c7c4" stroke-width="1.500" /><path d="M4 8h6v2H4zM5 3h5" stroke="#b6b9b6" fill="none" /></svg></button>
            <button class="nav-end" aria-label="Customize navigation bar"><svg viewBox="0 0 8 8"><circle cx="4" cy="4" r="3" fill="#555755" /><path d="M2.500 3h3L4 5.500z" fill="#aaa" /></svg></button>
          </nav>

          <div class="readout">7531&nbsp; 76.92 Hz 154.15 Hz&nbsp; parts=0 triangles=0:0</div>
        </div>

        <div class="doc-tabs">
          <button class="arrange" aria-label="Cascade"><svg viewBox="0 0 12 12"><path d="M1.500 1.500h6v3h-6zM3.500 4.500h6v3h-6zM5.500 7.500h6v3h-6z" fill="#5b5c5a" stroke="#ccc" /></svg></button>
          <button class="arrange" aria-label="Tile"><svg viewBox="0 0 12 12"><path d="M1.500 1.500h4v3h-4zM7.500 1.500h4v3h-4zM1.500 7.500h4v3h-4zM7.500 7.500h4v3h-4z" fill="none" stroke="#ccc" /></svg></button>
          <button class="arrange" aria-label="Tile horizontally"><svg viewBox="0 0 12 12"><path d="M1.500 1.500h10v3h-10zM1.500 7.500h10v3h-10z" fill="none" stroke="#ccc" /></svg></button>
          <button class="arrange" aria-label="Tile vertically"><svg viewBox="0 0 12 12"><path d="M1.500 1.500h4v9h-4zM7.500 1.500h4v9h-4z" fill="none" stroke="#ccc" /></svg></button>
          <button class="arrange" aria-label="Document list"><svg viewBox="0 0 12 12"><path d="M3 9h7L6.500 3z" fill="#eee" /></svg></button>
          <button class="doc-tab">My Home</button>
          <div class="doc-tab current"><span>heli3.iam</span><button aria-label="Close heli3.iam"><svg viewBox="0 0 8 8"><path d="m1.500 1.500 5 5M6.500 1.500l-5 5" stroke="#222" stroke-width="1.400" /></svg></button></div>
        </div>
        <svg class="play-mark" viewBox="0 0 46 46" aria-hidden="true"><circle cx="23" cy="23" r="23" fill="#6e706d" fill-opacity=".4" /><path d="M13 15v16l10-8zM18 12.500l18 10.500-18 10.500z" fill="none" stroke="#a4a5a2" stroke-opacity=".8" stroke-width="1.800" /></svg>
      </div>
    </main>

    <footer class="status"><span class="ready">Ready</span><span class="cell">302</span><span class="cell">139</span><svg class="grip" viewBox="0 0 12 12"><path d="M10 4v7M7 7v4M4 9v2" stroke="#bbb" stroke-dasharray="2 1" stroke-width="2" /></svg></footer>
  </div>
</template>

<style>
body { margin: 0; background: #4b4c4a; }
</style>

<style scoped>
* { box-sizing: border-box; }
.app { display: flex; flex-direction: column; height: 100vh; min-height: 480px; overflow: hidden; padding: 0 0 2px 3px; background: linear-gradient(90deg, #4b4c4a 0 3px, transparent 3px), #4e504c; font: 8px/10px Roboto, "Noto Sans", sans-serif; color: #444643; }
.defs { position: absolute; width: 0; height: 0; }
button { display: flex; align-items: center; justify-content: center; margin: 0; padding: 0; border: 0; background: none; color: inherit; font: inherit; white-space: nowrap; }
svg { display: block; flex: none; }
i { display: block; flex: none; }
.tiny { width: 8px; height: 8px; }

.titlebar { display: flex; flex: none; height: 20px; align-items: center; color: #dcddda; }
.quick, .info { display: flex; flex: none; align-items: center; }
.nudge { width: 3px; }
.qb { width: 16px; height: 18px; flex: none; }
.qb svg { width: 14px; height: 14px; }
.qc { width: 8px; height: 18px; flex: none; }
.qc svg { width: 8px; height: 8px; }
.qsep { width: 1px; height: 14px; margin: 0 2px 0 1px; background: #71736f; }
.combo { position: relative; width: 67px; height: 14px; }
.combo select { width: 100%; height: 14px; padding: 0 2px; border: 0; border-radius: 0; appearance: none; background: #8b8d8a; color: #747673; opacity: 1; font: italic 8px/14px Roboto, sans-serif; }
.combo svg { position: absolute; right: 1px; top: 3px; width: 8px; height: 8px; color: #444; }
.doc-title { display: flex; flex: 1; justify-content: center; gap: 8px; white-space: nowrap; }
.info { position: relative; }
.search { width: 120px; height: 13px; padding: 0 3px; border: 0; background: #8d8f8c; color: #fff; font: 8px/13px Roboto, sans-serif; }
.search::placeholder { color: #cdcecb; opacity: 1; }
.account { width: 70px; justify-content: flex-start; }
.account svg { width: 16px; height: 14px; }
.exchange { margin: 0 4px 0 2px; }
.window-buttons { display: flex; margin: 0 1px 0 12px; }
.blue-strip { position: absolute; top: -1px; left: 159px; width: 113px; height: 3px; border-radius: 0 0 2px 2px; background: #4191d8; }

.tabs { display: flex; flex: none; height: 13px; gap: 1px; }
.tab { height: 13px; padding: 0 6px; color: #dcddda; }
.file { width: 29px; margin-right: 1px; background: #ee8024; color: #fff; }
.active { width: 46px; background: #f3f5f2; color: #555753; }
.tab-toggle { margin-left: 9px; gap: 1px; color: #ddd; }
.pill { width: 10px; height: 8px; }

.ribbon { display: grid; flex: none; grid-template-columns: 62px 64px 122px 50px 82px 58px 84px max-content; height: 64px; background: #f3f5f2; border-bottom: 1px solid #2c2d2b; }
.panel { display: flex; flex-direction: column; border-right: 1px solid #dcdedb; }
.panel-body { display: flex; height: 51px; padding: 3px 2px 0; }
.panel-title { display: flex; align-items: center; justify-content: center; gap: 3px; height: 11px; white-space: nowrap; }
.panel-title .tiny { color: #222; }
.big { position: relative; flex: 1 1 auto; flex-direction: column; justify-content: flex-start; padding-top: 1px; height: 48px; }
.big-icon { width: 22px; height: 22px; margin-bottom: 2px; }
.beside { position: absolute; right: -2px; bottom: 7px; }
.stack { display: flex; flex-direction: column; padding-left: 3px; }
.small { height: 16px; gap: 3px; justify-content: flex-start; }
.small:disabled { color: #babcb9; }
.small-icon { width: 12px; height: 12px; }
.ribbon-options { width: 23px; height: 14px; margin: 3px 0 0 2px; border: 1px solid #c5c7c9; gap: 1px; }
.ribbon-options svg { width: 11px; height: 11px; }
.ribbon-options .tiny { width: 8px; height: 8px; }

.work { display: flex; flex: 1; min-height: 0; }
.browser { display: flex; flex: none; flex-direction: column; width: 123px; padding: 0 2px; background: #eff1ee; }
.browser button svg { width: 8px; height: 8px; }
.browser-close { display: flex; justify-content: flex-end; height: 9px; }
.browser-head { display: flex; justify-content: space-between; height: 15px; padding: 0 1px 0 5px; }
.model { gap: 1px; font-size: 9px; }
.browser .help svg { width: 10px; height: 10px; }
.browser-tools { display: flex; justify-content: space-between; height: 18px; padding: 0 3px 2px 2px; }
.browser .browser-tools > button > svg:first-child { width: 11px; height: 11px; }
.view-select { flex: 1; justify-content: flex-start; gap: 2px; padding: 0 4px 0 8px; }
.view-select span { flex: 1; text-align: left; }
.view-select .tiny { color: #222; }
.tree-area { display: flex; flex: 1; min-height: 0; }
.tree { flex: 1; min-width: 0; margin: 0; padding: 0; overflow: hidden; list-style: none; background: #fff; font: 7px/12px "DejaVu Sans Condensed", "Noto Sans", sans-serif; }
.tree li { display: flex; align-items: center; height: 12px; padding-left: 3px; white-space: nowrap; }
.tree .expand { width: 6px; height: 12px; margin-right: 4px; }
.tree .expand svg { width: 6px; height: 8px; }
.node { width: 12px; height: 12px; margin-right: 1px; }
.tree .root { padding-left: 6px; }
.root span { border: 1px solid #e33c3c; font: bold 9px/8px "Liberation Serif", serif; color: #222; }
.vscroll { display: flex; flex: none; flex-direction: column; width: 11px; background: #f0f1ef; }
.vscroll button { height: 12px; }
.vscroll i { height: 80px; background: #c7c9c6; }
.vscroll button:last-child { margin-top: auto; }
.hscroll { display: flex; flex: none; align-items: center; height: 11px; padding-right: 13px; }
.hscroll button { width: 11px; height: 11px; }
.hscroll i { width: 43px; height: 10px; background: #c7c9c6; }
.hscroll button:last-child { margin-left: auto; }
.browser-foot { height: 18px; border-bottom: 1px solid #d2d4d1; }

.stage { position: relative; display: flex; flex: 1; min-width: 0; flex-direction: column; }
.viewport { position: relative; flex: 1; min-height: 0; overflow: hidden; background: linear-gradient(#2c2e2b, #454743 19%, #666763 50%, #888986 79%, #9fa09d); }
.scene { position: absolute; inset: 0; width: 100%; height: 100%; }
.axis-name { font: 13px "Liberation Sans", Arial, sans-serif; }
.cube { position: absolute; top: 27px; right: 14px; width: 54px; height: 64px; }
.cube-text { font: 6px "Liberation Sans", Arial, sans-serif; fill: #4f5352; }
.mdi { position: absolute; top: 2px; right: 0; display: flex; gap: 3px; }
.mdi svg { width: 10px; height: 10px; }
.navbar { position: absolute; top: 96px; right: 1px; display: flex; flex-direction: column; align-items: center; width: 22px; height: 131px; border: 1px solid #555754; border-radius: 3px; background: #7a7d79; color: #4e514e; }
.navbar button { margin-top: 1px; }
.navbar button svg { width: 14px; height: 14px; }
.navbar .nav-end { align-self: flex-end; margin: 0; padding: 0 1px; }
.navbar .nav-end svg { width: 8px; height: 8px; }
.navbar .nav-wheel { margin: 5px 0 1px; }
.navbar .nav-wheel svg { width: 16px; height: 16px; }
.navbar i { width: 16px; height: 1px; margin-bottom: 2px; background: #5d605c; }
.navbar .nav-end:last-child { margin-top: auto; }
.readout { position: absolute; left: 50%; bottom: 0; width: 212px; height: 11px; margin-left: -107px; padding-left: 3px; overflow: hidden; background: #fff; color: #111; font: 9px/11px "Noto Sans", sans-serif; white-space: nowrap; }
.play-mark { position: absolute; right: 27px; bottom: 6px; width: 46px; height: 46px; }

.doc-tabs { display: flex; flex: none; height: 16px; background: #5b5c5a; color: #dededb; }
.arrange { width: 16px; }
.arrange svg { width: 12px; height: 12px; }
.doc-tab { display: flex; align-items: center; padding: 0 6px; border-left: 1px solid #858783; }
.current { gap: 4px; background: #f3f5f2; color: #555753; border-color: #f3f5f2; }
.current svg { width: 8px; height: 8px; }
.status { display: flex; flex: none; align-items: center; height: 16px; background: #f3f5f2; border-top: 1px solid #dfe1de; }
.ready { flex: 1; }
.cell { width: 26px; border-left: 1px solid #d4d6d3; line-height: 14px; text-align: center; }
.grip { width: 12px; height: 12px; border-left: 1px solid #d4d6d3; }
</style>
